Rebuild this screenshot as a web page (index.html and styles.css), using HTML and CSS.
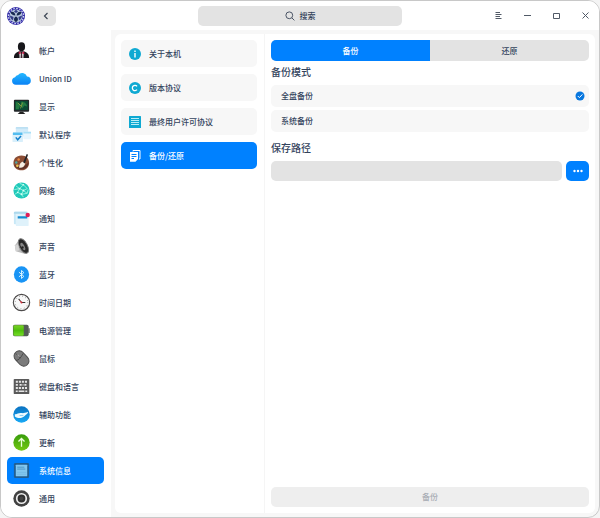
FILE: index.html
```html
<!DOCTYPE html>
<html lang="zh-CN">
<head>
    <meta charset="UTF-8">
    <meta name="viewport" content="width=device-width, initial-scale=1.0">
    <title>系统信息</title>
    <link rel="stylesheet" href="styles.css">
</head>
<body>
    <div class="window">
        <header class="titlebar">
            <div class="title-left">
                <svg class="logo" viewBox="0 0 20 20">
                    <circle cx="10" cy="10" r="9" fill="#3029a6"/>
                    <circle cx="10" cy="10" r="7.6" fill="none" stroke="#d3d8f3" stroke-width="1.2" stroke-dasharray="1.6 1.38"/>
                    <circle cx="10" cy="10" r="6.6" fill="#b3c3da"/>
                    <path d="M9.4 9.5C7 9.4 4.6 8.4 4.6 6C7.4 5.2 9.2 7 9.4 9.5zM10.6 9.5C10.8 7 12.6 5.2 15.4 6C15.4 8.4 13 9.4 10.6 9.5zM10 10.5C12.8 12 12.4 14.8 10 16.2C7.6 14.8 7.2 12 10 10.5z" fill="#17284f"/>
                    <path d="M8 5.4L10 3.8L12 5.4L10 7zM4 9.5L7.6 11L7 14.2C5 13.4 4 11.5 4 9.5zM16 9.5L12.4 11L13 14.2C15 13.4 16 11.5 16 9.5z" fill="#343c86"/>
                </svg>
                <button class="back" type="button" aria-label="返回">
                    <svg viewBox="0 0 20 20"><path d="M11.5 7L8.5 10L11.5 13" fill="none" stroke="#3d4654" stroke-width="1.2"/></svg>
                </button>
            </div>
            <button class="search" type="button">
                <svg viewBox="0 0 10 10"><circle cx="4.3" cy="4.3" r="3.4"/><path d="M6.8 6.8L9.4 9.4"/></svg>
                <span>搜索</span>
            </button>
            <div class="controls">
                <button type="button" aria-label="菜单"><svg viewBox="0 0 9 9"><path d="M1.5 1.5H6M1.5 3.5H7.5M1.5 5.5H6M1.5 7.5H7.5"/></svg></button>
                <button type="button" aria-label="最小化"><svg viewBox="0 0 9 9"><path d="M1 4.5H8"/></svg></button>
                <button type="button" aria-label="最大化"><svg viewBox="0 0 9 9"><path d="M1.5 2.5H7.5V7.5H1.5z"/></svg></button>
                <button type="button" aria-label="关闭"><svg viewBox="0 0 9 9"><path d="M1.5 1.5L7.5 7.5M7.5 1.5L1.5 7.5"/></svg></button>
            </div>
        </header>

        <div class="body">
            <nav class="sidebar">
                <a href="#"><svg viewBox="0 0 20 20">
                    <path d="M2 18C2 13 5 11.5 8 10.8H12C15 11.5 18 13 18 18z" fill="#17171b"/>
                    <path d="M7.6 11L10 13L12.4 11L12 18H8z" fill="#eee"/>
                    <path d="M7.2 10.8L10 12.5L12.8 10.8L13 14L10 12.8L7 14z" fill="#c6234d"/>
                    <path d="M9.4 12.5H10.6L11 18H9z" fill="#40222e"/>
                    <ellipse cx="10" cy="6" rx="3.8" ry="4.7" fill="#17171b"/>
                </svg><span>帐户</span></a>
                <a href="#"><svg viewBox="0 0 20 20">
                    <defs><linearGradient id="cloud" x2="0" y2="1"><stop stop-color="#25b9ff"/><stop offset="1" stop-color="#0a82f5"/></linearGradient></defs>
                    <path d="M4 16.5A4 4 0 0 1 3.2 8.6A4.2 4.2 0 0 1 6.4 6.2A5.4 5.4 0 0 1 15.8 8A4.3 4.3 0 0 1 16.4 16.5z" fill="url(#cloud)"/>
                </svg><span>Union ID</span></a>
                <a href="#"><svg viewBox="0 0 20 20">
                    <rect x="2" y="3" width="16" height="12.5" rx="1" fill="#24292b"/>
                    <rect x="3.2" y="4.2" width="13.6" height="9.5" fill="#0b4a34"/>
                    <path d="M4 5L9 8L7 13H4zM9.5 5C13 4.5 15.8 7 15.8 10L13 9L11 12L10 9z" fill="#247b42"/>
                    <path d="M6 6L10 10M11 6L9 12" stroke="#9cab42" stroke-width=".8"/>
                    <path d="M8.5 15.5H11.5L14 17.8H6z" fill="#222"/>
                </svg><span>显示</span></a>
                <a href="#"><svg viewBox="0 0 20 20">
                    <rect x="4" y="2" width="13" height="10" rx="1" fill="#d2ebf9"/>
                    <path d="M4 4V3Q4 2 5 2H16Q17 2 17 4z" fill="#bce0f3"/>
                    <rect x="12" y="7" width="8" height="8" rx="1" fill="#e7f5fd"/>
                    <path d="M12 7H20V9H12z" fill="#a8dff7"/>
                    <rect x=".5" y="8" width="11" height="10" rx="1" fill="#d8effb"/>
                    <path d="M1 8H11V10.4H1z" fill="#55bdef"/>
                    <path d="M4 13L6 15.5L9.5 11.5" fill="none" stroke="#1681cb" stroke-width="1.6"/>
                </svg><span>默认程序</span></a>
                <a href="#"><svg viewBox="0 0 20 20">
                    <path d="M10 2.5C4 2.5 1.5 6.5 1.5 10.5C1.5 15 5 18.2 10 18.2C15 18.2 18 14.5 18 10.5C18 6 15 2.5 10 2.5z" fill="#8a4c34"/>
                    <path d="M2.5 13C5 17.5 13 19 16.5 14L17.5 10L14 13L8 14z" fill="#613126"/>
                    <circle cx="7" cy="6.8" r="1.3" fill="#ef883e"/><circle cx="4.5" cy="10" r="1.3" fill="#50a5a0"/><circle cx="5.6" cy="13.5" r="1.4" fill="#e9bf4e"/>
                    <path d="M7.5 15.5C7.4 11.8 9.5 9 12 9.2L14 11C13 14 11 16.2 7.5 15.5z" fill="#f7eee2"/>
                    <path d="M11.7 9.7L15.5 1L16.9 1.8L13.5 11z" fill="#242326"/>
                </svg><span>个性化</span></a>
                <a href="#"><svg viewBox="0 0 20 20">
                    <circle cx="10" cy="10" r="8.5" fill="#21c9ba"/>
                    <path d="M4 5L8 8L6 12L3 14M8 8L12 4L16 8L12 10L8 8M12 10L10 14L6 12M12 10L16 13M10 14L12 17M8 2.5L12 4M2.5 9L8 8M10 14L16 13L17 9" fill="none" stroke="#94f3df"/>
                    <g fill="#d9fff5"><circle cx="8" cy="8" r="1"/><circle cx="12" cy="10" r="1"/><circle cx="10" cy="14" r="1"/><circle cx="12" cy="4" r=".8"/><circle cx="6" cy="12" r=".8"/></g>
                </svg><span>网络</span></a>
                <a href="#"><svg viewBox="0 0 20 20">
                    <rect x="2" y="3" width="14" height="13" rx="1" fill="#c8e8f7"/>
                    <rect x="4" y="5" width="13.5" height="13" rx="1" fill="#dff2fb"/>
                    <path d="M2 4Q2 3 3 3H16V5H2z" fill="#add8ec"/>
                    <path d="M6 7.5H16V10H6z" fill="#168bcf"/>
                    <circle cx="16.5" cy="6.3" r="2.3" fill="#df1f58"/>
                </svg><span>通知</span></a>
                <a href="#"><svg viewBox="0 0 20 20">
                    <path d="M3 9L8 2C12 0 18 11 17.5 16.5L13 17.5L4 15z" fill="#bababa"/>
                    <ellipse cx="12" cy="9.5" rx="4.2" ry="8.4" transform="rotate(-28 12 9.5)" fill="#292929" stroke="#7b7b7b"/>
                    <ellipse cx="11.4" cy="10" rx="1.8" ry="4.3" transform="rotate(-28 11.4 10)" fill="#858585"/>
                    <path d="M3 9L6.5 7.5L7.5 14L4 15z" fill="#d4d4d4"/><circle cx="11" cy="11" r="1.3" fill="#222"/>
                </svg><span>声音</span></a>
                <a href="#"><svg viewBox="0 0 20 20">
                    <ellipse cx="10" cy="10" rx="8" ry="8.6" fill="#1994f5"/>
                    <path d="M7.3 7.5L12.5 12L10 14.2V5.8L12.5 8L7.3 12.5" fill="none" stroke="#d9f3ff"/>
                </svg><span>蓝牙</span></a>
                <a href="#"><svg viewBox="0 0 20 20">
                    <circle cx="10" cy="10" r="8.6" fill="#f8f8f8" stroke="#4d4b4b" stroke-width="1.2"/>
                    <circle cx="10" cy="10" r="6.6" fill="none" stroke="#555" stroke-width="1" stroke-dasharray=".6 2.856"/>
                    <path d="M10 10L7 6.2M10 10H14" stroke="#333" stroke-width="1.1"/><path d="M8 8L10.5 10.5" stroke="#df3e48"/><circle cx="10" cy="10" r="1" fill="#cf2937"/>
                </svg><span>时间日期</span></a>
                <a href="#"><svg viewBox="0 0 20 20">
                    <defs><linearGradient id="power" x2="0" y2="1"><stop stop-color="#79d326"/><stop offset=".5" stop-color="#4fbe0c"/><stop offset="1" stop-color="#75df26"/></linearGradient></defs>
                    <rect x="1" y="4" width="16.5" height="12" rx="1.8" fill="#52604f"/><rect x="1.5" y="4.5" width="11" height="11" rx="1.2" fill="url(#power)"/>
                    <path d="M12.5 5H16Q17 5 17 6V14Q17 15 16 15H12.5z" fill="#555b58"/><path d="M17.5 7.5H18.5V12.5H17.5z" fill="#444"/>
                </svg><span>电源管理</span></a>
                <a href="#"><svg viewBox="0 0 20 20">
                    <rect x="4.5" y="1" width="11" height="18" rx="5.5" transform="rotate(-43 10 10)" fill="#7b7b7b" stroke="#4d4d4d"/>
                    <path d="M4.4 12Q8 12 11.8 4.5M8.8 9.7L4.2 4.8" fill="none" stroke="#3e3e3e" stroke-width=".8"/>
                    <path d="M5.8 6L7.8 8" stroke="#aaa" stroke-width="1.2"/>
                </svg><span>鼠标</span></a>
                <a href="#"><svg viewBox="0 0 20 20">
                    <rect x="1.8" y="2" width="16.4" height="16" rx="1" fill="#5a5a5a"/>
                    <path d="M4 5H16M4 8.3H7M8 8.3H12M13 8.3H16M4 11.6H16" stroke="#e4e4e4" stroke-width="2" stroke-dasharray="2.2 1"/>
                    <path d="M4 15H6M7 15H13M14 15H16" stroke="#e4e4e4" stroke-width="1.8"/>
                </svg><span>键盘和语言</span></a>
                <a href="#"><svg viewBox="0 0 20 20">
                    <defs><linearGradient id="access" x2="0" y2="1"><stop stop-color="#0b72c1"/><stop offset="1" stop-color="#19a9f5"/></linearGradient></defs>
                    <circle cx="10" cy="10" r="8.7" fill="url(#access)"/>
                    <path d="M3 9.5C5 10.5 6.5 8 10 8.5C12 8.8 13 8.6 17 7.2C16.8 9.8 14.2 10.4 13 11.8C10 14.5 6 14 3 12z" fill="#eefaff"/>
                    <path d="M8 11H12" stroke="#85c9ee"/>
                </svg><span>辅助功能</span></a>
                <a href="#"><svg viewBox="0 0 20 20">
                    <defs><linearGradient id="update" x2="0" y2="1"><stop stop-color="#379c0b"/><stop offset="1" stop-color="#75c914"/></linearGradient></defs>
                    <circle cx="10" cy="10" r="8.6" fill="url(#update)"/>
                    <path d="M10 14.5V6M6.8 9L10 5.8L13.2 9" fill="none" stroke="#edffdb" stroke-width="1.4"/>
                </svg><span>更新</span></a>
                <a href="#" class="active" aria-current="page"><svg viewBox="0 0 20 20">
                    <rect x="2" y="2" width="16" height="16" rx="1.5" fill="#235f91"/><rect x="4" y="4" width="12" height="12" rx=".6" fill="#83c7ef"/>
                    <path d="M5.5 6.5H13M5.5 8.5H14" stroke="#3e89bc" stroke-width=".8"/><path d="M5 12H15M5 14H15" stroke="#6db5e1" stroke-width=".6"/>
                </svg><span>系统信息</span></a>
                <a href="#"><svg viewBox="0 0 20 20">
                    <circle cx="10" cy="10" r="8.6" fill="#424242"/><circle cx="10" cy="10" r="5" fill="#303030" stroke="#eee" stroke-width="1.8"/><circle cx="10" cy="10" r="2" fill="#444"/>
                </svg><span>通用</span></a>
            </nav>

            <main class="content">
                <nav class="submenu">
                    <a href="#"><svg viewBox="0 0 12 12"><circle cx="6" cy="6" r="6" fill="#0fa9d2"/><path d="M6 5V9.5M6 2.5V4" stroke="#fff" stroke-width="1.4"/></svg><span>关于本机</span></a>
                    <a href="#"><svg viewBox="0 0 12 12"><circle cx="6" cy="6" r="6" fill="#0fa9d2"/><path d="M8 4.4A2.6 2.6 0 1 0 8 7.6" fill="none" stroke="#fff" stroke-width="1.3"/></svg><span>版本协议</span></a>
                    <a href="#"><svg viewBox="0 0 12 12"><rect width="12" height="12" rx=".5" fill="#0fa9d2"/><path d="M2 2.5H10M2 4.5H10M2 6.5H10M2 8.5H10" stroke="#b9edf7"/></svg><span>最终用户许可协议</span></a>
                    <a href="#" class="active" aria-current="page"><svg viewBox="0 0 12 12"><path d="M4 1.5V.5H11V9H10" fill="none" stroke="#fff"/><path d="M1 2H9V9L6.5 11.8H1z" fill="#fff"/><path d="M2.5 4.5H7.5M2.5 6.5H7.5M2.5 8.5H5" stroke="#0081ff"/></svg><span>备份/还原</span></a>
                </nav>

                <form class="backup">
                    <div class="tabs">
                        <button class="selected" type="button">备份</button>
                        <button type="button">还原</button>
                    </div>
                    <h2 id="modeTitle">备份模式</h2>
                    <div class="modes" role="radiogroup" aria-labelledby="modeTitle">
                        <label for="full"><span>全盘备份</span><input type="radio" id="full" name="mode" checked>
                            <svg viewBox="0 0 10 10"><circle cx="5" cy="5" r="4.5" fill="#0877df"/><path d="M2.8 5L4.4 6.6L7.4 3.4" fill="none" stroke="#fff"/></svg>
                        </label>
                        <label for="system"><span>系统备份</span><input type="radio" id="system" name="mode">
                            <svg viewBox="0 0 10 10"><circle cx="5" cy="5" r="4.5" fill="#0877df"/><path d="M2.8 5L4.4 6.6L7.4 3.4" fill="none" stroke="#fff"/></svg>
                        </label>
                    </div>
                    <h2><label for="path">保存路径</label></h2>
                    <div class="path-row">
                        <input type="text" id="path" name="path">
                        <button type="button" aria-label="选择路径"><svg viewBox="0 0 10 10"><circle cx="1.5" cy="5" r="1.2"/><circle cx="5" cy="5" r="1.2"/><circle cx="8.5" cy="5" r="1.2"/></svg></button>
                    </div>
                    <button class="submit" type="submit" disabled>备份</button>
                </form>
            </main>
        </div>
    </div>
</body>
</html>
```
FILE: styles.css
```css
* {
    box-sizing: border-box;
}

body {
    margin: 0;
    background-color: #f4f4f4;
    color: #33435c;
    font-family: "Noto Sans CJK SC", sans-serif;
    font-size: 8px;
    font-weight: 500;
    line-height: 12px;
}

button,
input {
    margin: 0;
    padding: 0;
    border: none;
    color: inherit;
    font: inherit;
}

a {
    color: inherit;
    text-decoration: none;
}

svg {
    display: block;
    flex: none;
}

.window {
    display: flex;
    flex-direction: column;
    min-height: 100vh;
    border: 1px solid #c8c8c8;
    border-radius: 12px;
    background-color: #f7f7f7;
    overflow: hidden;
}

.titlebar {
    display: grid;
    grid-template-columns: 1fr 34% 1fr;
    align-items: center;
    height: 29px;
    background-color: #fff;
}

.title-left {
    display: flex;
    align-items: center;
    gap: 10px;
    padding-left: 5px;
}

.logo {
    width: 20px;
    height: 20px;
}

.back {
    width: 20px;
    height: 20px;
    border-radius: 5px;
    background-color: #e5e5e5;
}

.search {
    display: flex;
    align-items: center;
    justify-content: center;
    gap: 5px;
    height: 20px;
    border-radius: 5px;
    background-color: #e3e3e3;
}

.search svg {
    width: 10px;
    height: 10px;
    fill: none;
    stroke: #4b5566;
}

.controls {
    display: flex;
    justify-content: flex-end;
    gap: 20px;
    padding-right: 9px;
}

.controls button {
    background: none;
}

.controls svg {
    width: 9px;
    height: 9px;
    fill: none;
    stroke: #515a67;
}

.body {
    display: flex;
    flex: 1;
}

.sidebar {
    display: flex;
    flex-direction: column;
    gap: 1px;
    width: 110px;
    padding: 7px 7px 4px 6px;
    background-color: #fff;
}

.sidebar a {
    display: flex;
    align-items: center;
    gap: 8px;
    height: 27px;
    padding-left: 5px;
    border-radius: 5px;
}

.sidebar svg {
    width: 19px;
    height: 19px;
}

.sidebar .active,
.submenu .active {
    background-color: #0081ff;
    color: #fff;
}

.content {
    display: flex;
    flex: 1;
    margin: 4px;
    border-radius: 6px;
    background-color: #fff;
}

.submenu {
    display: flex;
    flex-direction: column;
    gap: 7px;
    width: 150px;
    padding: 6px 7px 6px 6px;
    border-right: 1px solid #f5f5f5;
}

.submenu a {
    display: flex;
    align-items: center;
    gap: 8px;
    height: 27px;
    padding-left: 8px;
    border-radius: 5px;
    background-color: #f7f7f7;
}

.submenu svg {
    width: 12px;
    height: 12px;
}

.backup {
    display: flex;
    flex: 1;
    flex-direction: column;
    padding: 6px;
}

.tabs {
    display: flex;
    border-radius: 5px;
    background-color: #e3e3e3;
    overflow: hidden;
}

.tabs button {
    flex: 1;
    height: 21px;
    background: none;
}

.tabs .selected {
    background-color: #0081ff;
    color: #fff;
}

.backup h2 {
    margin: 4px 0 6px;
    font-size: 10px;
    font-weight: 500;
    line-height: 14px;
}

.modes {
    display: flex;
    flex-direction: column;
    gap: 3px;
    margin-bottom: 5px;
}

.modes label {
    display: flex;
    align-items: center;
    justify-content: space-between;
    height: 22px;
    padding: 0 4px 0 10px;
    border-radius: 5px;
    background-color: #f7f7f7;
}

.modes input {
    appearance: none;
    width: 0;
    height: 0;
}

.modes svg {
    display: none;
    width: 10px;
    height: 10px;
}

.modes input:checked + svg {
    display: block;
}

.path-row {
    display: flex;
    gap: 4px;
}

.path-row input {
    flex: 1;
    height: 20px;
    padding: 0 8px;
    border-radius: 5px;
    background-color: #e3e3e3;
}

.path-row button {
    display: flex;
    align-items: center;
    justify-content: center;
    width: 23px;
    border-radius: 5px;
    background-color: #0081ff;
}

.path-row svg {
    width: 10px;
    height: 10px;
    fill: #fff;
}

.submit {
    height: 20px;
    margin-top: auto;
    border-radius: 5px;
    background-color: #eee;
    color: #a9adb5;
}
```
